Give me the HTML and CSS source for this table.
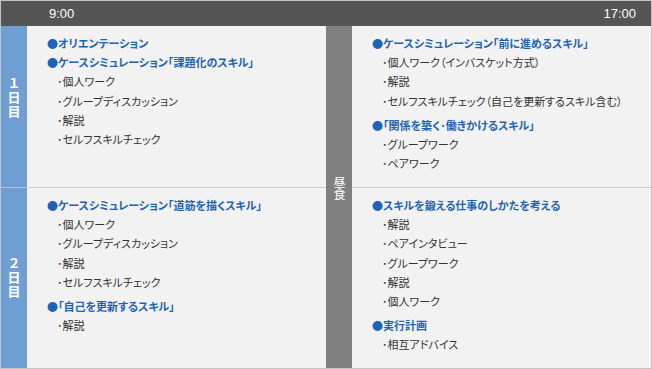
FILE: index.html
```html
<!DOCTYPE html>
<html lang="ja">
<head>
<meta charset="utf-8">
<title>研修スケジュール</title>
<link rel="stylesheet" href="styles.css">
</head>
<body>
<div class="schedule">
  <div class="header">
    <span>9:00</span>
    <span>17:00</span>
  </div>
  <div class="grid">
    <div class="day day1"><span class="vt">１日目</span></div>
    <div class="cell row1">
      <p class="h">●オリエンテーション</p>
      <p class="h">●ケースシミュレーション「課題化のスキル」</p>
      <p class="i">･個人ワーク</p>
      <p class="i">･グループディスカッション</p>
      <p class="i">･解説</p>
      <p class="i">･セルフスキルチェック</p>
    </div>
    <div class="lunch"><span class="vt">昼食</span></div>
    <div class="cell row1">
      <p class="h">●ケースシミュレーション「前に進めるスキル」</p>
      <p class="i">･個人ワーク（インバスケット方式）</p>
      <p class="i">･解説</p>
      <p class="i">･セルフスキルチェック（自己を更新するスキル含む）</p>
      <p class="h gap">●「関係を築く･働きかけるスキル」</p>
      <p class="i">･グループワーク</p>
      <p class="i">･ペアワーク</p>
    </div>
    <div class="day day2"><span class="vt">２日目</span></div>
    <div class="cell row2">
      <p class="h">●ケースシミュレーション「道筋を描くスキル」</p>
      <p class="i">･個人ワーク</p>
      <p class="i">･グループディスカッション</p>
      <p class="i">･解説</p>
      <p class="i">･セルフスキルチェック</p>
      <p class="h gap">●「自己を更新するスキル」</p>
      <p class="i">･解説</p>
    </div>
    <div class="cell row2">
      <p class="h">●スキルを鍛える仕事のしかたを考える</p>
      <p class="i">･解説</p>
      <p class="i">･ペアインタビュー</p>
      <p class="i">･グループワーク</p>
      <p class="i">･解説</p>
      <p class="i">･個人ワーク</p>
      <p class="h gap">●実行計画</p>
      <p class="i">･相互アドバイス</p>
    </div>
  </div>
</div>
</body>
</html>
```

FILE: styles.css
```css
* { box-sizing: border-box; }
html, body { margin: 0; padding: 0; background: #ffffff; }
body {
  font-family: "Noto Sans CJK JP", "Noto Sans", sans-serif;
}
.schedule {
  width: 652px;
  height: 369px;
  border: 1px solid #c4c4c4;
  background: #f2f2f2;
}
.header {
  height: 25px;
  background: #555555;
  color: #ffffff;
  display: flex;
  justify-content: space-between;
  align-items: center;
  padding: 0 15px 0 48px;
  font-family: "Liberation Sans", Arial, sans-serif;
  font-size: 13px;
}
.grid {
  display: grid;
  grid-template-columns: 26px 299px 26px 299px;
  grid-template-rows: 162px 180px;
}
.vt {
  writing-mode: vertical-rl;
  text-orientation: upright;
  line-height: 1;
}
.day {
  background: #6f9fd2;
  color: #ffffff;
  font-weight: bold;
  font-size: 13px;
  letter-spacing: 1px;
  display: flex;
  align-items: center;
  justify-content: center;
}
.day1 {
  border-bottom: 1px solid #a9c3e3;
  padding-bottom: 18px;
}
.lunch {
  grid-column: 3;
  grid-row: 1 / span 2;
  background: #808080;
  color: #ffffff;
  font-size: 12px;
  display: flex;
  align-items: center;
  justify-content: center;
  padding-bottom: 18px;
}
.cell {
  padding: 8px 0 0 20px;
}
.row1 { border-bottom: 1px solid #cccccc; }
.cell p {
  margin: 0;
  font-size: 11px;
  line-height: 19.2px;
  white-space: nowrap;
  font-feature-settings: "palt";
}
.h {
  color: #1f63b4;
  font-weight: bold;
}
.i {
  color: #333333;
  padding-left: 10px;
}
.h.gap { margin-top: 5px; }
```
